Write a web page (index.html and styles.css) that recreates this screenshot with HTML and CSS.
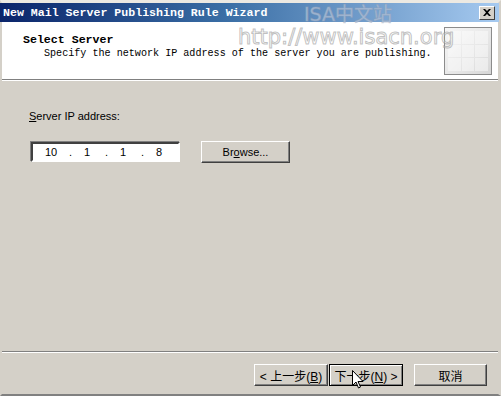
FILE: index.html
```html
<!DOCTYPE html>
<html lang="en">
<head>
    <meta charset="UTF-8">
    <title>New Mail Server Publishing Rule Wizard</title>
    <link rel="stylesheet" href="styles.css">
</head>
<body>
    <div class="window">
        <div class="titlebar">
            <div class="title-text">New Mail Server Publishing Rule Wizard</div>
            <div class="close-btn">
                <svg width="8" height="7" viewBox="0 0 8 7"><path d="M0 0h2l2 2 2-2h2L5 3.5 8 7H6L4 5 2 7H0l3-3.5z" fill="#000"/></svg>
            </div>
        </div>

        <div class="header">
            <div class="header-text">
                <div class="header-title">Select Server</div>
                <div class="header-sub">Specify the network IP address of the server you are publishing.</div>
            </div>
            <div class="header-icon">
                <div class="cell"></div><div class="cell"></div><div class="cell"></div>
                <div class="cell"></div><div class="cell"></div><div class="cell"></div>
                <div class="cell"></div><div class="cell"></div><div class="cell"></div>
            </div>
        </div>
        <div class="etched"></div>

        <div class="content">
            <div class="label"><u>S</u>erver IP address:</div>
            <div class="ip-row">
                <div class="ip-box">
                    <span class="oct">10</span><span class="dot">.</span>
                    <span class="oct">1</span><span class="dot">.</span>
                    <span class="oct">1</span><span class="dot">.</span>
                    <span class="oct">8</span>
                </div>
                <button class="btn btn-browse">Br<u>o</u>wse...</button>
            </div>
        </div>

        <div class="etched"></div>
        <div class="footer">
            <div class="nav">
                <button class="btn btn-nav">&lt; 上一步(<u>B</u>)</button>
                <button class="btn btn-nav btn-default">下一步(<u>N</u>) &gt;</button>
            </div>
            <button class="btn btn-cancel">取消</button>
        </div>

        <div class="watermark wm-top">ISA中文站</div>
        <div class="watermark wm-url">http://www.isacn.org</div>
        <svg class="cursor" width="12" height="20" viewBox="0 0 12 20">
            <path d="M0.5 0.5v15l3.5-3.5 2.5 6 2-1-2.5-5.5h5z" fill="#fff" stroke="#000" stroke-width="1"/>
        </svg>
    </div>
</body>
</html>
```

FILE: styles.css
```css
* {
    margin: 0;
    padding: 0;
    box-sizing: border-box;
}

body {
    width: 501px;
    height: 396px;
    overflow: hidden;
    background: #d4d0c8;
    font-family: 'Liberation Sans', Arial, 'Noto Sans CJK SC', sans-serif;
    font-size: 11px;
    color: #000;
}

.window {
    position: relative;
    width: 501px;
    height: 396px;
    display: flex;
    flex-direction: column;
    background: #d4d0c8;
    border-top: 3px solid #ece9e2;
    border-left: 2px solid #d4d0c8;
    border-right: 3px solid #d4d0c8;
    border-bottom: 2px solid #808080;
}

.titlebar {
    height: 19px;
    margin: 0 -1px 0 -2px;
    background: linear-gradient(90deg, #0a246a 0%, #3a6ea5 45%, #a6caf0 100%);
    display: flex;
    align-items: center;
    justify-content: space-between;
    padding: 0 4px 0 3px;
}

.title-text {
    font-family: 'Liberation Mono', 'Courier New', monospace;
    font-weight: bold;
    font-size: 11.6px;
    color: #fff;
}

.close-btn {
    width: 16px;
    height: 14px;
    background: #d4d0c8;
    border: 1px solid;
    border-color: #fff #404040 #404040 #fff;
    display: flex;
    align-items: center;
    justify-content: center;
}

.header {
    height: 57px;
    background: #fff;
    display: flex;
    justify-content: space-between;
    padding: 5px 6px 4px 21px;
}

.header-text {
    padding-top: 6px;
    font-family: 'Liberation Mono', 'Courier New', monospace;
}

.header-title {
    font-weight: bold;
    font-size: 11.6px;
    line-height: 14px;
}

.header-sub {
    font-size: 10.1px;
    line-height: 14px;
    padding-left: 21px;
}

.header-icon {
    width: 48px;
    height: 48px;
    border: 1px solid #8c8c8c;
    background: linear-gradient(135deg, #f7f7f7 0%, #e6e6e6 60%, #d6d6d6 100%);
    display: grid;
    grid-template-columns: repeat(3, 1fr);
    gap: 1px;
    padding: 3px;
}

.cell {
    background: rgba(255, 255, 255, 0.45);
}

.etched {
    height: 2px;
    border-top: 1px solid #808080;
    border-bottom: 1px solid #fff;
    flex: none;
}

.content {
    flex: 1;
    padding: 28px 0 0 27px;
}

.label {
    line-height: 14px;
}

.ip-row {
    display: flex;
    align-items: center;
    margin-top: 18px;
}

.ip-box {
    width: 149px;
    height: 20px;
    margin-left: 2px;
    background: #fff;
    border: 2px solid;
    border-color: #404040 #fff #fff #404040;
    box-shadow: -1px -1px 0 #808080, 1px 1px 0 #d4d0c8;
    display: flex;
    align-items: center;
    padding-left: 3px;
    font-size: 11px;
}

.oct {
    width: 30px;
    text-align: center;
}

.dot {
    width: 6px;
    text-align: right;
}

.btn {
    font-family: 'Liberation Sans', Arial, 'Noto Sans CJK SC', sans-serif;
    font-size: 11px;
    color: #000;
    background: #d4d0c8;
    border: 1px solid;
    border-color: #fff #404040 #404040 #fff;
    box-shadow: inset -1px -1px 0 #808080;
}

.btn-browse {
    width: 89px;
    height: 22px;
    margin-left: 21px;
}

.footer {
    height: 41px;
    display: flex;
    align-items: flex-start;
    justify-content: flex-end;
    padding: 11px 11px 0 0;
    flex: none;
}

.nav {
    display: flex;
}

.btn-nav {
    width: 74px;
    height: 22px;
    font-size: 12px;
}

.btn-default {
    outline: 1px solid #000;
    outline-offset: -1px;
    border-color: #000 #404040 #404040 #000;
    box-shadow: inset 1px 1px 0 #fff, inset -1px -1px 0 #808080;
    margin-left: 1px;
}

.btn-cancel {
    width: 73px;
    height: 22px;
    margin-left: 11px;
    font-size: 12px;
}

.watermark {
    position: absolute;
    color: rgba(215, 225, 240, 0.5);
    -webkit-text-stroke: 1px rgba(150, 160, 180, 0.5);
    font-family: 'DejaVu Sans', sans-serif;
    pointer-events: none;
    white-space: nowrap;
}

.wm-top {
    left: 302px;
    top: -4px;
    font-size: 19px;
    font-family: 'DejaVu Sans', 'Noto Sans CJK SC', sans-serif;
}

.wm-url {
    left: 236px;
    top: 22px;
    font-size: 21px;
    color: rgba(255, 255, 255, 0.3);
    -webkit-text-stroke: 1px rgba(140, 140, 140, 0.55);
}

.cursor {
    position: absolute;
    left: 350px;
    top: 367px;
}
```
